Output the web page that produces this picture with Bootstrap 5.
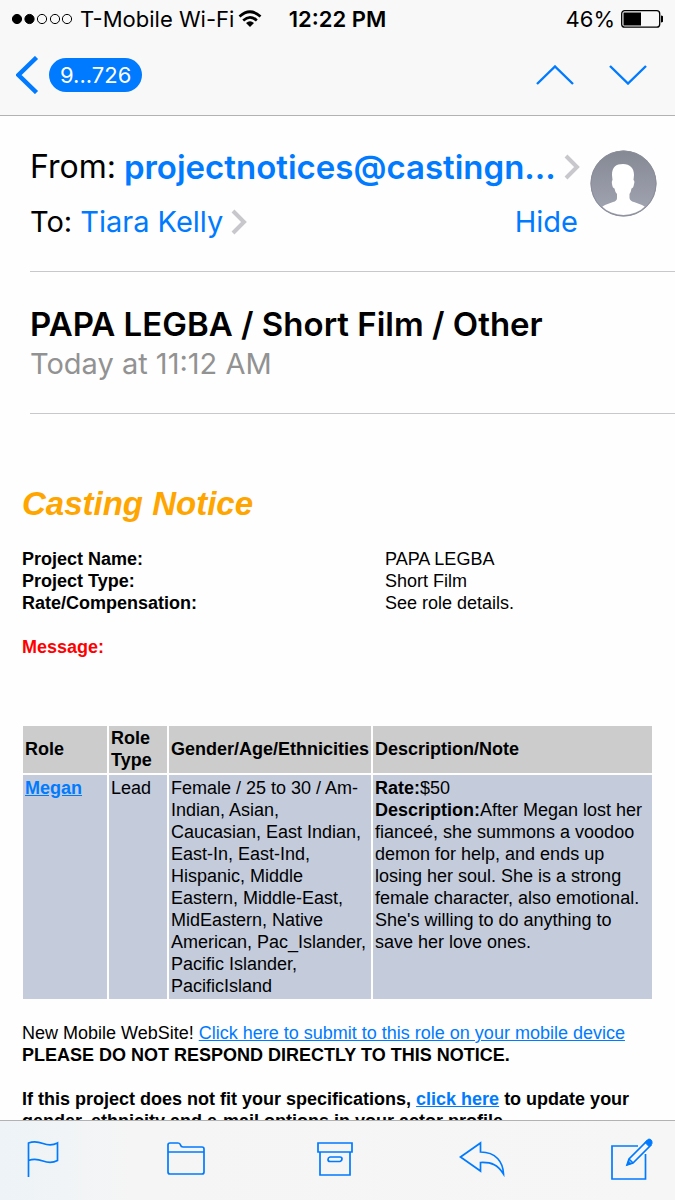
<!DOCTYPE html>
<html lang="en">
<head>
<meta charset="utf-8">
<meta name="viewport" content="width=device-width, initial-scale=1">
<title>Mail</title>
<link href="https://cdn.jsdelivr.net/npm/bootstrap@5.3.0/dist/css/bootstrap.min.css" rel="stylesheet">
<style>
  body { font-family: Inter, "Liberation Sans", sans-serif; color: #000; background: #fefefe; }
  a, .btn-plain { color: #007aff; }
  .btn-plain { background: none; border: 0; padding: 0; line-height: 0; }
  svg { display: block; fill: none; flex: none; }
  .bars { background: #f8f8f8; border-bottom: 1px solid #b2b2b2; }
  .status { height: 38px; padding: 0 12px; font-size: 22px; line-height: 38px; }
  .signal { margin-right: 8px; }
  .status-side { flex: 1 1 0; white-space: nowrap; }
  .toolbar { height: 77px; padding: 0 28px 3px 16px; }
  .pill { background: #007aff; color: #fff; border-radius: 17px; height: 34px; line-height: 34px; padding: 0 11px; font-size: 22px; }
  .steps { gap: 35px; }
  .mail { overflow-y: auto; scrollbar-width: none; }
  .mail::-webkit-scrollbar { display: none; }
  .envelope { margin-left: 30px; padding: 30px 18px 29px 0; border-bottom: 1px solid #c8c7cc; }
  .from-line { font-size: 32px; line-height: 42px; }
  .from-line a { font-size: 33px; }
  .to-line { font-size: 29px; line-height: 40px; margin-top: 14px; }
  .envelope a { text-decoration: none; }
  .subject { margin-left: 30px; padding: 32px 0 30px; border-bottom: 1px solid #c8c7cc; }
  .subject h1 { font-size: 33px; line-height: 40px; font-weight: 600; margin: 0; }
  .subject time { display: block; font-size: 29px; line-height: 39px; color: #929292; }
  .notice { font-family: "Liberation Sans", Arial, sans-serif; font-size: 18px; line-height: 22px; padding: 70px 22px 0; }
  .notice h2 { font-size: 33px; line-height: 40px; font-weight: 700; font-style: italic; color: #ffa500; margin: 0 0 24px; }
  .facts dt, .facts dd { margin: 0; }
  .facts { margin: 0 0 22px; display: grid; grid-template-columns: 363px 1fr; }
  .alert-red { color: #f00; margin: 0 0 66px; }
  .roles { width: 100%; table-layout: fixed; border-collapse: separate; border-spacing: 2px; margin: 0 0 21px; }
  .roles-wrap { margin: 0 -1px; }
  .roles th { padding: 1px 2px 2px; background: #ccc; vertical-align: middle; }
  .roles td { padding: 2px; background: #c4ccdc; vertical-align: top; }
  .c-role { width: 84px; } .c-type { width: 58px; } .c-who { width: 202px; }
  .actions { background: linear-gradient(90deg, #edf3f7, #f5f5f5 20%, #f6f6f6); border-top: 1px solid #b2b2b2; height: 80px; padding: 0 22px 4px 26px; }
</style>
</head>
<body>
<div class="d-flex flex-column vh-100">
  <header class="bars flex-shrink-0">
    <div class="status d-flex align-items-center">
      <div class="status-side d-flex align-items-center">
        <svg class="signal" width="60" height="12" viewBox="0 0 60 12" stroke="#000" aria-hidden="true"><g fill="#000"><circle cx="5" cy="6" r="4.600"/><circle cx="17.500" cy="6" r="4.600"/></g><circle cx="30" cy="6" r="4.600"/><circle cx="43" cy="6" r="4.600"/><circle cx="55" cy="6" r="4.600"/></svg>
        <span>T-Mobile Wi-Fi</span>
        <svg class="ms-1" width="24" height="18" viewBox="0 0 24 18" stroke="#000" stroke-width="2.700" aria-hidden="true"><path d="M1.500 6.500Q12-3 22.500 6.500M5.200 10.400Q12 4.200 18.800 10.400"/><path d="M8 13Q12 9.500 16 13L12 17Z" fill="#000" stroke="none"/></svg>
      </div>
      <strong class="fw-semibold">12:22 PM</strong>
      <div class="status-side d-flex align-items-center justify-content-end gap-1">
        <span>46%</span>
        <svg width="44" height="18" viewBox="0 0 44 18" aria-hidden="true"><rect x="2.700" y=".7" width="38" height="16.500" rx="3" stroke="#000" stroke-width="1.300"/><path d="M4.500 2.500H22V15.500H4.500ZM42 5.500Q45 6 45 9T42 12.500Z" fill="#000"/></svg>
      </div>
    </div>
    <nav class="toolbar d-flex align-items-center justify-content-between">
      <button class="btn-plain d-flex align-items-center" type="button" aria-label="Back to inbox">
        <svg width="33" height="38" viewBox="0 0 33 38" stroke="#007aff" stroke-width="4.500"><path d="M20.500 1.500L2.500 19L20.500 36.500"/></svg>
        <span class="pill">9...726</span>
      </button>
      <div class="steps d-flex">
        <button class="btn-plain" type="button" aria-label="Previous message"><svg width="38" height="20" viewBox="0 0 38 20" stroke="#007aff" stroke-width="2.400"><path d="M1 19L19 1.500L37 19"/></svg></button>
        <button class="btn-plain" type="button" aria-label="Next message"><svg width="38" height="20" viewBox="0 0 38 20" stroke="#007aff" stroke-width="2.400"><path d="M1 1L19 18.500L37 1"/></svg></button>
      </div>
    </nav>
  </header>

  <main class="mail flex-grow-1">
    <section class="envelope d-flex">
      <div class="flex-grow-1 me-2">
        <div class="from-line d-flex align-items-center">
          <span class="me-2">From:</span><a class="fw-semibold" href="#from">projectnotices@castingn...</a>
          <svg class="ms-2" width="16" height="26" viewBox="0 0 16 26" stroke="#c7c7cc" stroke-width="4"><path d="M2 2L13 13L2 24"/></svg>
        </div>
        <div class="to-line d-flex align-items-center">
          <span class="me-2">To:</span><a href="#to">Tiara Kelly</a>
          <svg class="ms-2" width="16" height="26" viewBox="0 0 16 26" stroke="#c7c7cc" stroke-width="4"><path d="M2 2L13 13L2 24"/></svg>
          <a class="ms-auto me-1" href="#hide">Hide</a>
        </div>
      </div>
      <svg class="mt-1" width="67" height="67" viewBox="0 0 67 67" aria-hidden="true">
        <defs><linearGradient id="sky" x2="0" y2="1"><stop stop-color="#858994"/><stop offset="1" stop-color="#a3a6b3"/></linearGradient><clipPath id="disc"><circle cx="33.500" cy="33.500" r="31.500"/></clipPath></defs>
        <circle cx="33.500" cy="33.500" r="33" fill="url(#sky)"/>
        <circle cx="33.500" cy="33.500" r="32.500" stroke="#8b8e99"/>
        <path clip-path="url(#disc)" fill="#fff" d="M33 14C40 14 44 18 44 25L43.500 30Q45 31 44 34Q43.500 38 41.500 38.500Q41 42 39.500 44V48Q40 51 44 52L52 55Q55 56 56 59Q46 66 34 66Q20 66 11 59Q12 56 15 55L23 52Q27 51 27 48V44Q25 42 24.500 38.500Q22.500 38 22 34Q21.500 31 22.500 30L22 25C22 17 26 14 33 14Z"/>
      </svg>
    </section>

    <section class="subject">
      <h1>PAPA LEGBA / Short Film / Other</h1>
      <time>Today at 11:12 AM</time>
    </section>

    <article class="notice">
      <h2>Casting Notice</h2>
      <dl class="facts">
        <dt>Project Name:</dt><dd>PAPA LEGBA</dd>
        <dt>Project Type:</dt><dd>Short Film</dd>
        <dt>Rate/Compensation:</dt><dd>See role details.</dd>
      </dl>
      <p class="alert-red fw-bold">Message:</p>
      <div class="roles-wrap">
      <table class="roles">
        <thead>
          <tr><th class="c-role">Role</th><th class="c-type">Role Type</th><th class="c-who">Gender/Age/Ethnicities</th><th>Description/Note</th></tr>
        </thead>
        <tbody>
          <tr>
            <td><a class="fw-bold" href="#megan">Megan</a></td>
            <td>Lead</td>
            <td>Female / 25 to 30 / Am-Indian, Asian, Caucasian,&nbsp;East Indian, East-In, East-Ind, Hispanic, Middle Eastern, Middle-East, MidEastern, Native American, Pac_Islander, Pacific Islander, PacificIsland</td>
            <td><b>Rate:</b>$50<br><b>Description:</b>After Megan lost her fianceé, she summons a voodoo demon for help, and ends up losing her soul. She is a strong female character, also emotional. She's willing to do anything to save her love ones.</td>
          </tr>
        </tbody>
      </table>
      </div>
      <p class="mb-0">New Mobile WebSite! <a href="#submit">Click here to submit to this role on your mobile device</a><br><b>PLEASE DO NOT RESPOND DIRECTLY TO THIS NOTICE.</b></p>
      <p class="mb-0"><br><b>If this project does not fit your specifications, <a href="#profile">click here</a> to update your gender, ethnicity and e-mail options in your actor profile.</b></p>
    </article>
  </main>

  <footer class="actions flex-shrink-0 d-flex align-items-center justify-content-between">
    <button class="btn-plain" type="button" aria-label="Flag"><svg width="34" height="38" viewBox="0 0 34 38" stroke="#007aff" stroke-width="1.700"><path d="M2.500 37V3Q9 .5 17 3.500T31.500 3V20.500Q25 24 17 21T2.500 20.500"/></svg></button>
    <button class="btn-plain" type="button" aria-label="Move to folder"><svg width="40" height="38" viewBox="0 0 40 38" stroke="#007aff" stroke-width="1.700"><path d="M2 12V5Q2 3 4 3H12Q14 3 14.500 5T17 7H36Q38 7 38 9V32Q38 34 36 34H4Q2 34 2 32V12H38"/></svg></button>
    <button class="btn-plain" type="button" aria-label="Archive"><svg width="42" height="38" viewBox="-4 0 42 38" stroke="#007aff" stroke-width="1.700"><path d="M2 3H36V12H2ZM4 12V35H34V12M14 17H24Q26 17 26 19T24 21.500H14Q12 21.500 12 19.500T14 17Z"/></svg></button>
    <button class="btn-plain" type="button" aria-label="Reply"><svg width="46" height="38" viewBox="0 0 46 38" stroke="#007aff" stroke-width="1.700"><path d="M1.500 17L21.500 3V12C37 12 44 22 44.500 34C39 25 33 22 21.500 22.500V31Z"/></svg></button>
    <button class="btn-plain" type="button" aria-label="Compose"><svg width="42" height="44" viewBox="0 0 42 44" stroke="#007aff" stroke-width="1.700"><path d="M27 9H1V42H34.500V17M16 28L18 22L36 4L40 8L22 26ZM18 22L22 26"/><path d="M34 5.500L37.500 2Q41.500 2 41 6.500L38 9.500ZM16 28L17.500 24L20 26.500Z" fill="#007aff" stroke-width="1"/></svg></button>
  </footer>
</div>
<script src="https://cdn.jsdelivr.net/npm/bootstrap@5.3.0/dist/js/bootstrap.bundle.min.js"></script>
</body>
</html>
